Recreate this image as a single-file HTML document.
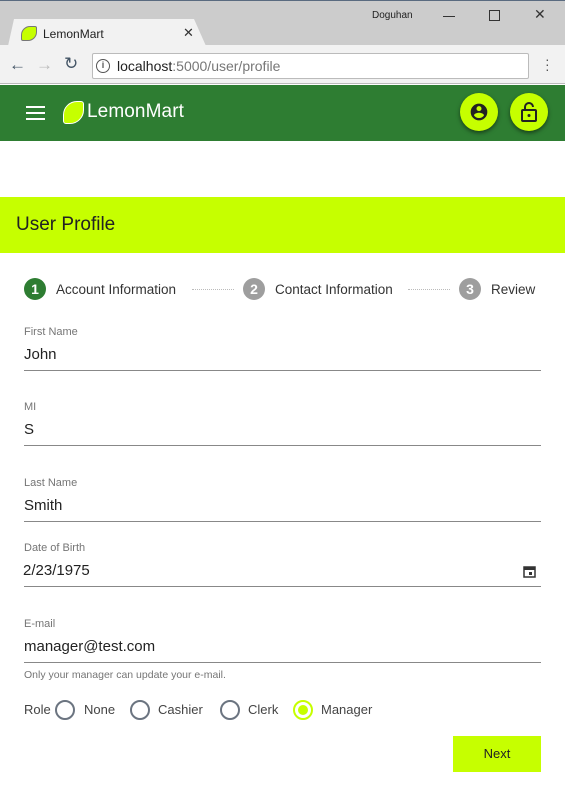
<!DOCTYPE html>
<html><head><style>
*{margin:0;padding:0;box-sizing:border-box}
body{width:565px;height:798px;position:relative;background:#fff;font-family:"Liberation Sans",sans-serif;overflow:hidden}
.a{position:absolute}
.lbl{position:absolute;left:24px;font-size:11px;color:#757575}
.val{position:absolute;left:24px;font-size:15px;color:#222}
.ul{position:absolute;left:24px;width:517px;height:1px;background:#888}
.circ{position:absolute;width:22px;height:22px;border-radius:50%;color:#fff;font-size:14px;font-weight:bold;text-align:center;line-height:22px}
.st{position:absolute;font-size:13.5px;color:#333;top:282px}
.dash{position:absolute;top:289px;height:0;border-top:1px dotted #bbb}
.rad{position:absolute;top:700px;width:20px;height:20px;border-radius:50%;border:2px solid #6b7480}
.rt{position:absolute;top:702px;font-size:13px;color:#444}
</style></head><body>
<div class="a" style="left:0;top:0;width:565px;height:84px;background:#cccccc;border-top:1px solid #5a6b80"></div>
<div class="a" style="left:372px;top:10px;font-size:10px;color:#222">Doguhan</div>
<div class="a" style="left:443px;top:16px;width:12px;height:1px;background:#333"></div>
<div class="a" style="left:489px;top:10px;width:11px;height:11px;border:1px solid #333"></div>
<div class="a" style="left:534px;top:6px;font-size:14px;color:#333">✕</div>
<div class="a" style="left:8px;top:19px;width:198px;height:27px;background:#f2f2f2;clip-path:polygon(6px 0,186px 0,198px 27px,0 27px)"></div>
<div class="a" style="left:21px;top:26px;width:16px;height:15px;background:#c6ff00;border-radius:9px 2px 9px 2px;border:1px solid #777"></div>
<div class="a" style="left:43px;top:27px;font-size:12px;color:#222">LemonMart</div>
<div class="a" style="left:183px;top:25px;font-size:13px;color:#333">✕</div>
<div class="a" style="left:0;top:45px;width:565px;height:39px;background:#f2f2f2;border-bottom:1px solid #bbb"></div>
<div class="a" style="left:9px;top:55px;font-size:17px;color:#456">←</div>
<div class="a" style="left:36px;top:55px;font-size:17px;color:#bbb">→</div>
<div class="a" style="left:64px;top:54px;font-size:17px;color:#456">↻</div>
<div class="a" style="left:92px;top:53px;width:437px;height:26px;background:#fff;border:1px solid #bbb;border-radius:2px"></div>
<div class="a" style="left:96px;top:59px;width:14px;height:14px;border:1.5px solid #555;border-radius:50%;font-size:9px;text-align:center;line-height:11px;color:#555;font-weight:bold">i</div>
<div class="a" style="left:117px;top:58px;font-size:14px;color:#222">localhost<span style="color:#777">:5000/user/profile</span></div>
<div class="a" style="left:545px;top:57px;font-size:14px;color:#555;line-height:5px">·<br>·<br>·</div>
<div class="a" style="left:0;top:85px;width:565px;height:56px;background:#2e7d32"></div>
<div class="a" style="left:26px;top:106px;width:19px;height:2px;background:#fff;box-shadow:0 6px 0 #fff,0 12px 0 #fff"></div>
<div class="a" style="left:63px;top:101px;width:21px;height:23px;background:#c6ff00;border-radius:14px 3px 14px 3px;border:1px solid #fff"></div>
<div class="a" style="left:87px;top:101px;font-size:19px;color:#fff;letter-spacing:0.1px">LemonMart</div>
<div class="a" style="left:460px;top:93px;width:38px;height:38px;border-radius:50%;background:#c6ff00;box-shadow:0 2px 4px rgba(0,0,0,.5)"></div>
<svg class="a" style="left:469px;top:102px" width="20" height="20" viewBox="0 0 24 24"><path fill="#222" d="M12 2a10 10 0 1 0 0 20 10 10 0 0 0 0-20zm0 3a3 3 0 1 1 0 6 3 3 0 0 1 0-6zm0 14.2a7.2 7.2 0 0 1-6-3.2c0-2 4-3.1 6-3.1s6 1.1 6 3.1a7.2 7.2 0 0 1-6 3.2z"/></svg>
<div class="a" style="left:510px;top:93px;width:38px;height:38px;border-radius:50%;background:#c6ff00;box-shadow:0 2px 4px rgba(0,0,0,.5)"></div>
<svg class="a" style="left:519px;top:101px" width="20" height="22" viewBox="0 0 20 22"><rect x="3" y="9" width="14" height="11" rx="1" fill="none" stroke="#222" stroke-width="2"/><path d="M6 9V6a4 4 0 0 1 8 0" fill="none" stroke="#222" stroke-width="2"/><circle cx="10" cy="14.5" r="1.5" fill="#222"/></svg>
<div class="a" style="left:0;top:197px;width:565px;height:56px;background:#c6ff00"></div>
<div class="a" style="left:16px;top:214px;font-size:19px;color:#222">User Profile</div>
<div class="circ" style="left:24px;top:278px;background:#2e7d32">1</div>
<div class="st" style="left:56px">Account Information</div>
<div class="dash" style="left:192px;width:42px"></div>
<div class="circ" style="left:243px;top:278px;background:#9e9e9e">2</div>
<div class="st" style="left:275px">Contact Information</div>
<div class="dash" style="left:408px;width:42px"></div>
<div class="circ" style="left:459px;top:278px;background:#9e9e9e">3</div>
<div class="st" style="left:491px">Review</div>
<div class="lbl" style="top:326px">First Name</div><div class="val" style="top:346px">John</div><div class="ul" style="top:370px"></div>
<div class="lbl" style="top:401px">MI</div><div class="val" style="top:421px">S</div><div class="ul" style="top:445px"></div>
<div class="lbl" style="top:477px">Last Name</div><div class="val" style="top:497px">Smith</div><div class="ul" style="top:521px"></div>
<div class="lbl" style="top:542px">Date of Birth</div><div class="val" style="top:562px;left:23px">2/23/1975</div><div class="ul" style="top:586px"></div>
<svg class="a" style="left:523px;top:565px" width="13" height="13" viewBox="0 0 13 13"><rect x="1" y="2" width="11" height="10" fill="none" stroke="#333" stroke-width="1.5"/><rect x="1" y="2" width="11" height="3" fill="#333"/><rect x="6" y="7" width="3" height="3" fill="#333"/></svg>
<div class="lbl" style="top:618px">E-mail</div><div class="val" style="top:638px">manager@test.com</div><div class="ul" style="top:662px"></div>
<div class="lbl" style="top:669px;font-size:10.5px">Only your manager can update your e-mail.</div>
<div class="rt" style="left:24px">Role</div>
<div class="rad" style="left:55px"></div><div class="rt" style="left:84px">None</div>
<div class="rad" style="left:130px"></div><div class="rt" style="left:158px">Cashier</div>
<div class="rad" style="left:220px"></div><div class="rt" style="left:248px">Clerk</div>
<div class="rad" style="left:293px;border-color:#c6ff00"></div><div class="a" style="left:298px;top:705px;width:10px;height:10px;border-radius:50%;background:#c6ff00"></div><div class="rt" style="left:321px">Manager</div>
<div class="a" style="left:453px;top:736px;width:88px;height:36px;background:#c6ff00;font-size:13px;color:#222;text-align:center;line-height:36px">Next</div>
</body></html>
